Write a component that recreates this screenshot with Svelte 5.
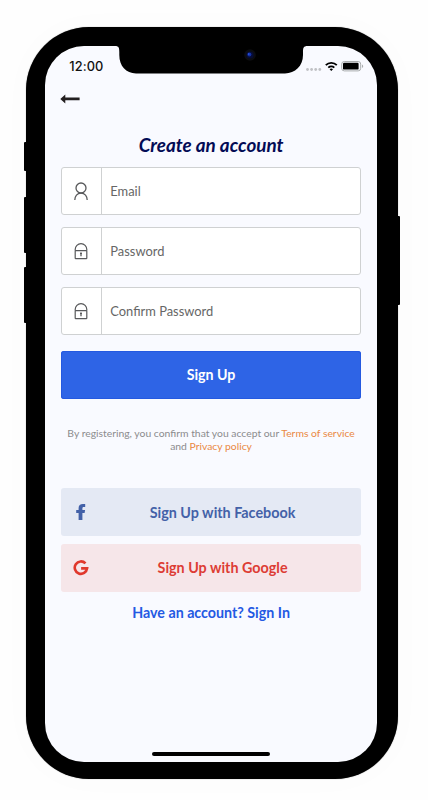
<script>
  const fields = [
    { label: 'Email', icon: 'user', type: 'email' },
    { label: 'Password', icon: 'lock', type: 'password' },
    { label: 'Confirm Password', icon: 'lock', type: 'password' }
  ];
</script>

<main>
  <div class="phone">
    <i class="key mute"></i>
    <i class="key up"></i>
    <i class="key down"></i>
    <i class="key power"></i>
    <div class="screen">
      <svg class="notch" width="200" height="28" viewBox="0 0 200 28">
        <path d="M4 0C8 0 8.300 2 8.300 6V9C8.300 20 15 27.400 25 27.400H174C184 27.400 192 20 192 9V6C192 2 192.500 0 196.500 0Z" fill="#000" />
        <circle cx="139" cy="9" r="5.800" fill="#0c0d10" />
        <circle cx="139" cy="9" r="3.600" fill="#070c35" />
        <circle cx="138.400" cy="8.600" r="2" fill="#1230a0" />
        <circle cx="137.800" cy="8.100" r=".8" fill="#315cf0" />
      </svg>
      <header class="status">
        <span class="time">12:00</span>
        <svg width="60" height="14" viewBox="0 0 60 14">
          <g fill="#c0c1c5">
            <circle cx="2.500" cy="9.500" r="1.400" /><circle cx="6.600" cy="9.500" r="1.400" />
            <circle cx="10.700" cy="9.500" r="1.400" /><circle cx="14.800" cy="9.500" r="1.400" />
          </g>
          <g fill="none" stroke="#000" stroke-width="1.800">
            <path d="M20.800 5.200a7.600 7.600 0 0 1 11 0" />
            <path d="M23.300 7.700a4.300 4.300 0 0 1 6 0" />
          </g>
          <path d="M24.600 9.200a2.500 2.500 0 0 1 3.400 0l-1.700 1.900z" fill="#000" />
          <rect x="36.700" y="1.500" width="19" height="9.400" rx="2.600" fill="none" stroke="#aaadae" />
          <rect x="38" y="2.800" width="15.600" height="6.800" rx="1.200" fill="#000" />
          <path d="M57 4.500c1.600.5 1.600 2.900 0 3.400z" fill="#aaadae" />
        </svg>
      </header>
      <button class="back" aria-label="Back">
        <svg width="20" height="10" viewBox="0 0 20 10" fill="#231f20">
          <path d="M.3 5L5.300.6V3.600H19.600V6.200H5.300V9.400Z" />
        </svg>
      </button>

      <h1>Create an account</h1>
      <form>
        {#each fields as field}
          <label class="field">
            <span class="icon">
              {#if field.icon === 'user'}
                <svg width="14" height="19" viewBox="0 0 14 19" fill="none" stroke="#58595b" stroke-width="1.300">
                  <circle cx="7" cy="6" r="5" />
                  <path d="M.8 18C.8 14 3.200 11.200 7 11.200S13.200 14 13.200 18" />
                </svg>
              {:else}
                <svg width="14" height="19" viewBox="0 0 14 19" fill="none" stroke="#58595b" stroke-width="1.200">
                  <path d="M1.200 8.600V7.500a5.800 5.800 0 0 1 11.600 0V8.600" />
                  <rect x="1.200" y="8.600" width="11.600" height="8.100" rx=".6" />
                  <path d="M7 10.500V14.200M6 11.300H8" stroke-width="1.300" />
                </svg>
              {/if}
            </span>
            <input type={field.type} placeholder={field.label} />
          </label>
        {/each}
        <button class="submit" type="button">Sign Up</button>
      </form>

      <p class="terms">
        By registering, you confirm that you accept our <a href="#terms">Terms of service</a><br />and
        <a href="#privacy">Privacy policy</a>
      </p>

      <div class="social">
        <button class="facebook">
          <svg width="16" height="16" viewBox="0 0 16 16" fill="#4361a8">
            <path d="M5.600 16V9H3.200V6H5.600V4C5.600 1.500 7.200 0 9.900 0c1.300 0 2.300.1 2.300.1v2.800h-1.400c-1.200 0-1.400.6-1.400 1.500V6H12.100L11.600 9H9.400v7z" />
          </svg>
          <span>Sign Up with Facebook</span>
        </button>
        <button class="google">
          <svg width="16" height="16" viewBox="0 0 16 16" fill="none" stroke="#e0382c" stroke-width="2.600">
            <path d="M12.500 3.400A6.200 6.200 0 1 0 14.100 8.400H8.100" />
          </svg>
          <span>Sign Up with Google</span>
        </button>
      </div>
      <a class="signin" href="#signin">Have an account? Sign In</a>
      <i class="home"></i>
    </div>
  </div>
</main>

<style>
  :global(body) { background: #fefefe; }
  main {
    box-sizing: border-box;
    height: 800px;
    padding: 26.500px 29.700px 0 26px;
    overflow: hidden;
    font-family: Lato, sans-serif;
  }
  .phone {
    position: relative;
    box-sizing: border-box;
    height: 752.500px;
    padding: 19.500px 21.500px 16.500px 19.300px;
    border-radius: 63px;
    background: #000;
    box-shadow: 0 0 1px #777, 0 0 40px rgba(0, 0, 0, 0.015);
  }
  .key { position: absolute; left: -2px; width: 4px; border-radius: 1px; background: #000; }
  .mute { top: 115px; height: 29px; }
  .up { top: 170px; height: 56px; }
  .down { top: 240.500px; height: 56px; }
  .power { left: auto; right: -2px; top: 189px; height: 89px; }
  .screen {
    position: relative;
    box-sizing: border-box;
    height: 716px;
    padding: 0 16px;
    border-radius: 39px;
    background: #f9faff;
    display: flex;
    flex-direction: column;
  }
  .notch { position: absolute; top: -0.500px; left: 66px; }
  .status { display: flex; justify-content: space-between; height: 40px; padding: 13px 0 0 8px; box-sizing: border-box; margin-right: -4px; }
  .status svg { margin-top: 0.500px; }
  .time { font: 500 12.800px/15px Inter, sans-serif; letter-spacing: 0.100px; color: #111; }
  button { font-family: inherit; border: 0; padding: 0; }
  .back { align-self: flex-start; display: flex; height: 25px; align-items: center; background: none; margin-left: -1px; }
  h1 {
    margin: 19px 0 0;
    height: 37.300px;
    font-size: 18.850px;
    line-height: 29px;
    font-style: italic;
    font-weight: 700;
    color: #030b55;
    text-align: center;
  }
  form { display: flex; flex-direction: column; gap: 12px; }
  .field {
    display: flex;
    box-sizing: border-box;
    height: 47.900px;
    border: 1px solid #cfd1d2;
    border-radius: 3px;
    background: #fff;
  }
  .icon { display: flex; width: 39px; align-items: center; justify-content: center; border-right: 1px solid #cfd1d2; }
  .icon svg { margin: 0.500px 0 0 -1px; }
  input { flex: 1; min-width: 0; border: 0; padding: 0 8px 0.500px; background: none; font: 12.900px Lato, sans-serif; color: #666; outline: 0; }
  input::placeholder { color: #666; opacity: 1; }
  .submit {
    height: 47.800px;
    margin-top: 4px;
    border-radius: 3px;
    background: #2e64e6;
    box-shadow: inset 0 0 0 1px #2459e0;
    color: #fff;
    font-size: 14.200px;
    font-weight: 700;
  }
  .terms { margin: 28px 0 0; text-align: center; font-size: 10.360px; line-height: 13px; color: #8b8b8d; }
  .terms a { color: #ea8842; text-decoration: none; }
  .social { display: flex; flex-direction: column; gap: 8px; margin-top: 35.300px; }
  .social button { display: flex; align-items: center; height: 47.800px; padding: 0 12px; border-radius: 3px; font-size: 14.350px; font-weight: 700; }
  .social span { flex: 1; padding-left: 7px; }
  .social .facebook span { padding-top: 1px; }
  .facebook { background: #e4e9f4; color: #4361a8; }
  .google { background: #f6e6e9; color: #dd3c34; }
  .signin { margin-top: 12px; text-align: center; font-size: 14.250px; line-height: 18px; font-weight: 700; color: #2459e3; text-decoration: none; }
  .home { align-self: center; width: 118px; height: 4px; margin: auto 0 6px; border-radius: 2px; background: #000; }
</style>
